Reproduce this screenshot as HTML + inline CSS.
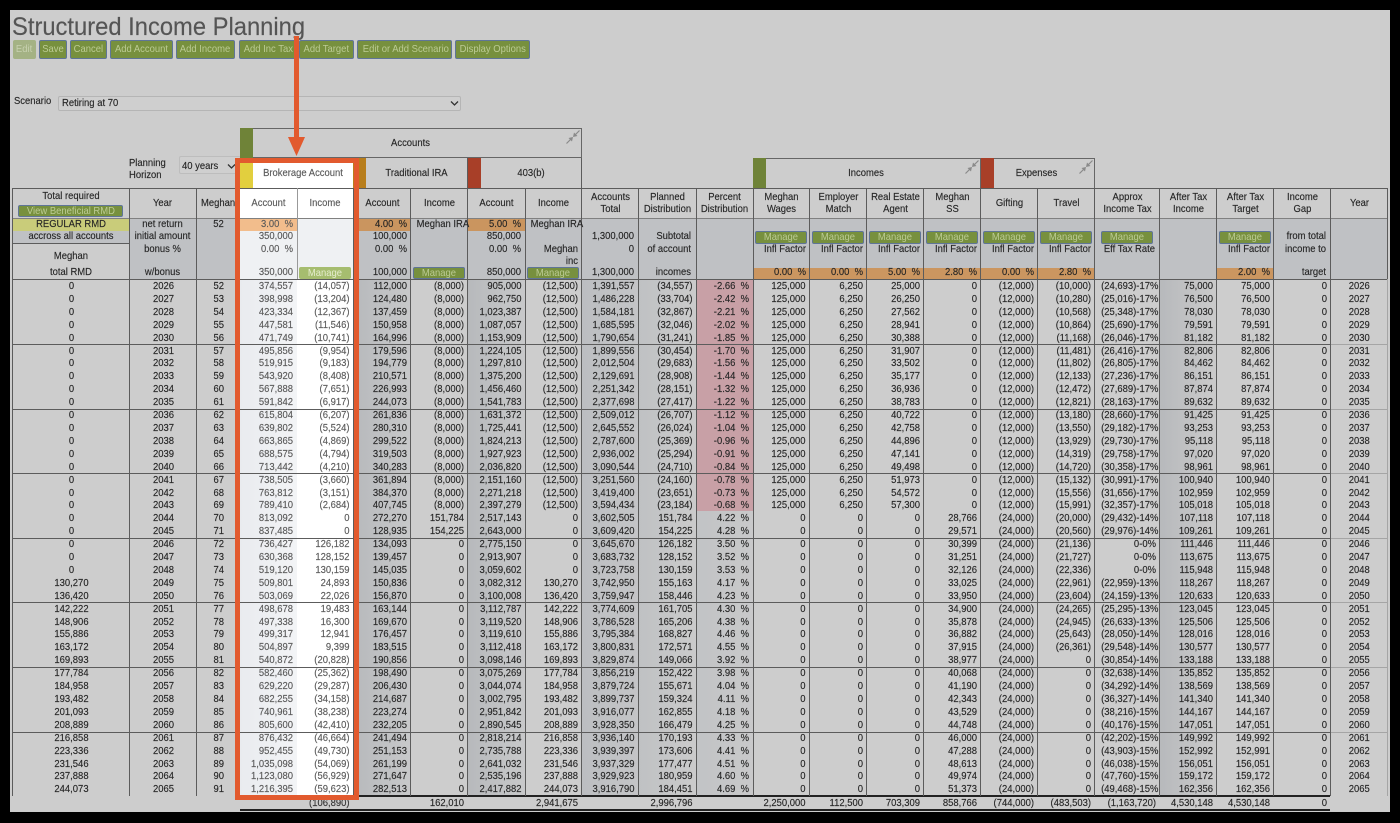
<!DOCTYPE html>
<html><head><meta charset="utf-8"><title>Structured Income Planning</title>
<style>
html,body{margin:0;padding:0;background:#000;width:1400px;height:823px;overflow:hidden}
body{position:relative;font-family:"Liberation Sans",sans-serif;font-size:10.5px;color:#262626;-webkit-text-stroke:.15px}
#w{position:absolute;left:0;top:0;width:1400px;height:823px;filter:blur(.3px)}
.a{position:absolute}
.t{position:absolute;white-space:nowrap;line-height:13px;transform:scaleX(.9);transform-origin:0 50%}
.r{text-align:right;transform-origin:100% 50%}
.c{text-align:center;transform-origin:50% 50%}
.h{color:#5a5a5a}
.b{position:absolute;box-sizing:border-box;background:#77903e;border:1px solid #5f7597;border-radius:2px;color:#bccb94;text-align:center;white-space:nowrap;overflow:hidden;-webkit-text-stroke:0}
.b span{display:inline-block;transform:scaleX(.9)}
.g{position:absolute;left:12.5px;top:280px;display:grid;grid-template-columns:117px 67px 43.5px 57px 56.5px 57px 57px 57.5px 57px 56.5px 57.5px 57px 56.5px 57px 57px 57px 57px 57px 65px 57px 57px 57px 56.5px;grid-auto-rows:12.91px;line-height:12.91px}
.g p{margin:0;padding-right:4px;text-align:right;white-space:nowrap;transform:scaleX(.9);transform-origin:calc(100% - 4px) 50%}
.g p:nth-child(23n+1),.g p:nth-child(23n+2),.g p:nth-child(23n+3),.g p:nth-child(23n){padding:0;text-align:center;transform-origin:50% 50%}
.g p:nth-child(23n+4),.g p:nth-child(23n+5){color:#5a5a5a}
.g p:nth-child(n+921){margin-top:1px}
.g p:nth-child(925){color:#333}
.vl{position:absolute;width:1px;background:#5c5c5c}
.hl{position:absolute;height:1px;background:#5c5c5c}
</style></head>
<body><div id="w">
<div class="a" style="left:10px;top:10px;width:1380px;height:802px;background:#cdcdcd"></div>

<div class="t" style="left:12px;top:12px;font-size:25px;line-height:30px;color:#555;transform:scaleX(.95)">Structured Income Planning</div>

<div class="b" style="left:13px;top:40px;width:23px;height:19px;line-height:17px;background:#a4b284;border-color:#a4b284;color:#c8d1b0"><span>Edit</span></div>
<div class="b" style="left:39px;top:40px;width:28px;height:19px;line-height:17px"><span>Save</span></div>
<div class="b" style="left:70px;top:40px;width:37px;height:19px;line-height:17px"><span>Cancel</span></div>
<div class="b" style="left:110px;top:40px;width:63px;height:19px;line-height:17px"><span>Add Account</span></div>
<div class="b" style="left:176px;top:40px;width:59px;height:19px;line-height:17px"><span>Add Income</span></div>
<div class="b" style="left:239px;top:40px;width:58px;height:19px;line-height:17px"><span>Add Inc Tax</span></div>
<div class="b" style="left:299px;top:40px;width:55px;height:19px;line-height:17px"><span>Add Target</span></div>
<div class="b" style="left:357px;top:40px;width:95px;height:19px;line-height:17px"><span>Edit or Add Scenario</span></div>
<div class="b" style="left:455px;top:40px;width:75px;height:19px;line-height:17px"><span>Display Options</span></div>

<div class="t" style="left:14px;top:95px">Scenario</div>
<div class="a" style="left:58px;top:96px;width:403px;height:15px;box-sizing:border-box;background:#cfcfcf;border:1px solid #b5b5b5;border-radius:2px"></div>
<div class="t" style="left:62px;top:97px">Retiring at 70</div>
<svg class="a" style="left:450px;top:100px" width="9" height="7" viewBox="0 0 9 7"><path d="M1 1.5L4.5 5L8 1.5" fill="none" stroke="#333" stroke-width="1.3"/></svg>

<div class="t" style="left:129px;top:157px">Planning</div>
<div class="t" style="left:129px;top:169px">Horizon</div>
<div class="a" style="left:179px;top:156px;width:62px;height:18px;box-sizing:border-box;background:#cfcfcf;border:1px solid #bdbdbd;border-radius:2px"></div>
<div class="t" style="left:182px;top:160px">40 years</div>
<svg class="a" style="left:227px;top:163px" width="9" height="7" viewBox="0 0 9 7"><path d="M1 1.5L4.5 5L8 1.5" fill="none" stroke="#333" stroke-width="1.3"/></svg>

<!-- tab blocks -->
<div class="a" style="left:240px;top:128px;width:13px;height:30px;background:#6f8338"></div>
<div class="a" style="left:253px;top:128px;width:329px;height:30px;box-sizing:border-box;border-top:1px solid #666;border-right:1px solid #666;border-bottom:1px solid #666"></div>
<div class="t c" style="left:253px;top:137px;width:315px">Accounts</div>
<div class="a" style="left:253px;top:158px;width:100px;height:30px;background:#fff"></div>
<div class="a" style="left:240px;top:158px;width:13px;height:30px;background:#e2cf3e"></div>
<div class="t c h" style="left:253px;top:167px;width:100px">Brokerage Account</div>
<div class="a" style="left:353px;top:158px;width:13px;height:30px;background:#b87e1c"></div>
<div class="t c" style="left:366px;top:167px;width:101px">Traditional IRA</div>
<div class="a" style="left:467px;top:158px;width:14px;height:30px;background:#a83f28"></div>
<div class="t c" style="left:481px;top:167px;width:100px">403(b)</div>
<div class="vl" style="left:581px;top:158px;height:30px"></div>
<svg class="a" style="left:566px;top:130px" width="14" height="14" viewBox="0 0 14 14"><path d="M13.5.5L9 5M.5 13.5L5 9" stroke="#8a8a8a" stroke-width="1.2" fill="none"/><path d="M7 7L8 2.5L11.5 6ZM7 7L6 11.5L2.5 8Z" fill="#8a8a8a"/></svg>

<div class="a" style="left:753px;top:158px;width:13px;height:30px;background:#6f8338"></div>
<div class="a" style="left:766px;top:158px;width:215px;height:30px;box-sizing:border-box;border-top:1px solid #666;border-right:1px solid #666"></div>
<div class="t c" style="left:766px;top:167px;width:200px">Incomes</div>
<svg class="a" style="left:965px;top:160px" width="14" height="14" viewBox="0 0 14 14"><path d="M13.5.5L9 5M.5 13.5L5 9" stroke="#8a8a8a" stroke-width="1.2" fill="none"/><path d="M7 7L8 2.5L11.5 6ZM7 7L6 11.5L2.5 8Z" fill="#8a8a8a"/></svg>
<div class="a" style="left:981px;top:158px;width:13px;height:30px;background:#a83f28"></div>
<div class="a" style="left:994px;top:158px;width:101px;height:30px;box-sizing:border-box;border-top:1px solid #666;border-right:1px solid #666"></div>
<div class="t c" style="left:994px;top:167px;width:85px">Expenses</div>
<svg class="a" style="left:1079px;top:160px" width="14" height="14" viewBox="0 0 14 14"><path d="M13.5.5L9 5M.5 13.5L5 9" stroke="#8a8a8a" stroke-width="1.2" fill="none"/><path d="M7 7L8 2.5L11.5 6ZM7 7L6 11.5L2.5 8Z" fill="#8a8a8a"/></svg>

<!-- sub-row shading -->
<div class="a" style="left:129px;top:218px;width:111px;height:61px;background:#bfc1c4"></div>
<div class="a" style="left:354px;top:218px;width:1033px;height:61px;background:#bfc1c4"></div>
<div class="a" style="left:13px;top:218px;width:116px;height:13px;background:#c9cc7a"></div>
<div class="a" style="left:13px;top:231px;width:116px;height:12px;background:#bfc1c4"></div>
<!-- highlighted columns -->
<div class="a" style="left:240px;top:188px;width:113px;height:30px;background:#fff"></div>
<div class="a" style="left:240px;top:218px;width:113px;height:61px;background:#eff1f3"></div>
<div class="a" style="left:240px;top:279px;width:57px;height:517px;background:linear-gradient(90deg,#e9ebef,#f3f4f6)"></div>
<div class="a" style="left:297px;top:279px;width:56px;height:517px;background:#fff"></div>
<!-- data-column shading -->
<div class="a" style="left:354px;top:279px;width:57px;height:517px;background:linear-gradient(90deg,#b7b9bc,#c8c9ca)"></div>
<div class="a" style="left:468px;top:279px;width:57px;height:517px;background:linear-gradient(90deg,#b7b9bc,#c8c9ca)"></div>
<div class="a" style="left:582px;top:279px;width:57px;height:517px;background:linear-gradient(90deg,#bcbec1,#c4c5c7)"></div>
<div class="a" style="left:639px;top:279px;width:57px;height:517px;background:linear-gradient(90deg,#bfc1c3,#cbcbcb)"></div>
<div class="a" style="left:696px;top:500px;width:57px;height:296px;background:linear-gradient(90deg,#c1c3c5,#c9c9ca)"></div>
<div class="a" style="left:696px;top:279px;width:57px;height:232px;background:#c8a0a6"></div>
<div class="a" style="left:1160px;top:279px;width:57px;height:517px;background:linear-gradient(90deg,#b7b9bc,#cbcbcb)"></div>
<!-- orange inputs -->
<div class="a" style="left:240px;top:218px;width:57px;height:13px;background:#f2bd8c"></div>
<div class="a" style="left:354px;top:218px;width:57px;height:13px;background:#ca955f"></div>
<div class="a" style="left:468px;top:218px;width:57px;height:13px;background:#ca955f"></div>
<div class="a" style="left:753px;top:268px;width:342px;height:11px;background:#cb9660"></div>
<div class="a" style="left:1217px;top:268px;width:57px;height:11px;background:#cb9660"></div>

<!-- horizontal rules -->
<div class="hl" style="left:12px;top:188px;width:1375px"></div>
<div class="hl" style="left:12px;top:218px;width:1375px;background:#808080"></div>
<div class="hl" style="left:12px;top:243px;width:117px"></div>
<div class="hl" style="left:12px;top:279px;width:1375px"></div>
<div class="hl" style="left:12px;top:344px;width:1318px"></div>
<div class="hl" style="left:12px;top:409px;width:1318px"></div>
<div class="hl" style="left:12px;top:473px;width:1318px"></div>
<div class="hl" style="left:12px;top:538px;width:1318px"></div>
<div class="hl" style="left:12px;top:602px;width:1318px"></div>
<div class="hl" style="left:12px;top:667px;width:1318px"></div>
<div class="hl" style="left:12px;top:732px;width:1318px"></div>
<div class="hl" style="left:1330px;top:344px;width:57px;background:#a5a5a5"></div>
<div class="hl" style="left:1330px;top:409px;width:57px;background:#a5a5a5"></div>
<div class="hl" style="left:1330px;top:473px;width:57px;background:#a5a5a5"></div>
<div class="hl" style="left:1330px;top:538px;width:57px;background:#a5a5a5"></div>
<div class="hl" style="left:1330px;top:602px;width:57px;background:#a5a5a5"></div>
<div class="hl" style="left:1330px;top:667px;width:57px;background:#a5a5a5"></div>
<div class="hl" style="left:1330px;top:732px;width:57px;background:#a5a5a5"></div>
<div class="a" style="left:240px;top:795px;width:1090px;height:2px;background:#222"></div>
<div class="a" style="left:240px;top:809px;width:1090px;height:2px;background:#222"></div>

<!-- vertical rules -->
<div class="vl" style="left:12px;top:188px;height:608px"></div>
<div class="vl" style="left:129px;top:188px;height:608px"></div>
<div class="vl" style="left:196px;top:188px;height:608px"></div>
<div class="vl" style="left:297px;top:188px;height:91px;background:#999"></div>
<div class="vl" style="left:353px;top:188px;height:608px"></div>
<div class="vl" style="left:410px;top:188px;height:608px"></div>
<div class="vl" style="left:467px;top:158px;height:638px"></div>
<div class="vl" style="left:525px;top:188px;height:608px"></div>
<div class="vl" style="left:581px;top:188px;height:608px"></div>
<div class="vl" style="left:638px;top:188px;height:608px"></div>
<div class="vl" style="left:696px;top:188px;height:608px"></div>
<div class="vl" style="left:753px;top:188px;height:608px"></div>
<div class="vl" style="left:809px;top:188px;height:608px"></div>
<div class="vl" style="left:866px;top:188px;height:608px"></div>
<div class="vl" style="left:923px;top:188px;height:608px"></div>
<div class="vl" style="left:980px;top:188px;height:608px"></div>
<div class="vl" style="left:1037px;top:188px;height:608px"></div>
<div class="vl" style="left:1094px;top:188px;height:608px"></div>
<div class="vl" style="left:1159px;top:188px;height:608px"></div>
<div class="vl" style="left:1216px;top:188px;height:608px"></div>
<div class="vl" style="left:1273px;top:188px;height:608px"></div>
<div class="vl" style="left:1330px;top:188px;height:608px"></div>
<div class="vl" style="left:1387px;top:188px;height:91px"></div>
<div class="vl" style="left:1387px;top:279px;height:517px;background:#a5a5a5"></div>

<!-- header labels -->
<div class="t c" style="left:13px;top:190px;width:116px">Total required</div>
<div class="b" style="left:18px;top:205px;width:105px;height:12px;line-height:10px"><span>View Beneficial RMD</span></div>
<div class="t c" style="left:129px;top:197px;width:67px">Year</div>
<div class="t" style="left:201px;top:197px">Meghan</div>
<div class="t c h" style="left:240px;top:197px;width:57px">Account</div>
<div class="t c h" style="left:297px;top:197px;width:56px">Income</div>
<div class="t c" style="left:354px;top:197px;width:57px">Account</div>
<div class="t c" style="left:411px;top:197px;width:57px">Income</div>
<div class="t c" style="left:468px;top:197px;width:57px">Account</div>
<div class="t c" style="left:525px;top:197px;width:57px">Income</div>
<div class="t c" style="left:582px;top:191px;width:57px">Accounts</div>
<div class="t c" style="left:582px;top:203px;width:57px">Total</div>
<div class="t c" style="left:639px;top:191px;width:57px">Planned</div>
<div class="t c" style="left:639px;top:203px;width:57px">Distribution</div>
<div class="t c" style="left:696px;top:191px;width:57px">Percent</div>
<div class="t c" style="left:696px;top:203px;width:57px">Distribution</div>
<div class="t c" style="left:753px;top:191px;width:57px">Meghan</div>
<div class="t c" style="left:753px;top:203px;width:57px">Wages</div>
<div class="t c" style="left:810px;top:191px;width:57px">Employer</div>
<div class="t c" style="left:810px;top:203px;width:57px">Match</div>
<div class="t c" style="left:867px;top:191px;width:57px">Real Estate</div>
<div class="t c" style="left:867px;top:203px;width:57px">Agent</div>
<div class="t c" style="left:924px;top:191px;width:57px">Meghan</div>
<div class="t c" style="left:924px;top:203px;width:57px">SS</div>
<div class="t c" style="left:981px;top:197px;width:57px">Gifting</div>
<div class="t c" style="left:1038px;top:197px;width:57px">Travel</div>
<div class="t c" style="left:1095px;top:191px;width:65px">Approx</div>
<div class="t c" style="left:1095px;top:203px;width:65px">Income Tax</div>
<div class="t c" style="left:1160px;top:191px;width:57px">After Tax</div>
<div class="t c" style="left:1160px;top:203px;width:57px">Income</div>
<div class="t c" style="left:1217px;top:191px;width:57px">After Tax</div>
<div class="t c" style="left:1217px;top:203px;width:57px">Target</div>
<div class="t c" style="left:1274px;top:191px;width:57px">Income</div>
<div class="t c" style="left:1274px;top:203px;width:57px">Gap</div>
<div class="t c" style="left:1331px;top:197px;width:57px">Year</div>

<!-- sub rows, left -->
<div class="t c" style="left:13px;top:218px;width:116px">REGULAR RMD</div>
<div class="t c" style="left:13px;top:230px;width:116px">accross all accounts</div>
<div class="t c" style="left:13px;top:250px;width:116px">Meghan</div>
<div class="t c" style="left:13px;top:266px;width:116px">total RMD</div>
<div class="t c" style="left:129px;top:218px;width:67px">net return</div>
<div class="t c" style="left:129px;top:230px;width:67px">initial amount</div>
<div class="t c" style="left:129px;top:243px;width:67px">bonus %</div>
<div class="t c" style="left:129px;top:266px;width:67px">w/bonus</div>
<div class="t c" style="left:197px;top:218px;width:43px">52</div>

<div class="t r h" style="left:240px;top:218px;width:53px">3.00 &nbsp;%</div>
<div class="t r h" style="left:240px;top:230px;width:53px">350,000</div>
<div class="t r h" style="left:240px;top:243px;width:53px">0.00 &nbsp;%</div>
<div class="t r h" style="left:240px;top:266px;width:53px">350,000</div>
<div class="b" style="left:299px;top:267px;width:52px;height:12px;line-height:10px;background:#a6bd6f;border-color:#a6bd6f;color:#e6edcf"><span>Manage</span></div>

<div class="t r" style="left:354px;top:218px;width:53px">4.00 &nbsp;%</div>
<div class="t r" style="left:354px;top:230px;width:53px">100,000</div>
<div class="t r" style="left:354px;top:243px;width:53px">0.00 &nbsp;%</div>
<div class="t r" style="left:354px;top:266px;width:53px">100,000</div>
<div class="t r" style="left:411px;top:218px;width:56px">Meghan IRA</div>
<div class="b" style="left:413px;top:267px;width:52px;height:12px;line-height:10px"><span>Manage</span></div>

<div class="t r" style="left:468px;top:218px;width:53px">5.00 &nbsp;%</div>
<div class="t r" style="left:468px;top:230px;width:53px">850,000</div>
<div class="t r" style="left:468px;top:243px;width:53px">0.00 &nbsp;%</div>
<div class="t r" style="left:468px;top:266px;width:53px">850,000</div>
<div class="t r" style="left:525px;top:218px;width:56px">Meghan IRA</div>
<div class="t r" style="left:525px;top:243px;width:53px">Meghan</div>
<div class="t r" style="left:525px;top:255px;width:53px">inc</div>
<div class="b" style="left:527px;top:267px;width:52px;height:12px;line-height:10px"><span>Manage</span></div>

<div class="t r" style="left:582px;top:230px;width:52px">1,300,000</div>
<div class="t r" style="left:582px;top:243px;width:52px">0</div>
<div class="t r" style="left:582px;top:266px;width:52px">1,300,000</div>
<div class="t r" style="left:639px;top:230px;width:52px">Subtotal</div>
<div class="t r" style="left:639px;top:243px;width:52px">of account</div>
<div class="t r" style="left:639px;top:266px;width:52px">incomes</div>

<!-- sub rows, right -->
<div class="b" style="left:755px;top:231px;width:52px;height:13px;line-height:11px"><span>Manage</span></div>
<div class="b" style="left:812px;top:231px;width:52px;height:13px;line-height:11px"><span>Manage</span></div>
<div class="b" style="left:869px;top:231px;width:52px;height:13px;line-height:11px"><span>Manage</span></div>
<div class="b" style="left:926px;top:231px;width:52px;height:13px;line-height:11px"><span>Manage</span></div>
<div class="b" style="left:983px;top:231px;width:52px;height:13px;line-height:11px"><span>Manage</span></div>
<div class="b" style="left:1040px;top:231px;width:52px;height:13px;line-height:11px"><span>Manage</span></div>
<div class="b" style="left:1101px;top:231px;width:52px;height:13px;line-height:11px"><span>Manage</span></div>
<div class="b" style="left:1219px;top:231px;width:52px;height:13px;line-height:11px"><span>Manage</span></div>
<div class="t r" style="left:753px;top:243px;width:53px">Infl Factor</div>
<div class="t r" style="left:810px;top:243px;width:53px">Infl Factor</div>
<div class="t r" style="left:867px;top:243px;width:53px">Infl Factor</div>
<div class="t r" style="left:924px;top:243px;width:53px">Infl Factor</div>
<div class="t r" style="left:981px;top:243px;width:53px">Infl Factor</div>
<div class="t r" style="left:1038px;top:243px;width:53px">Infl Factor</div>
<div class="t r" style="left:1095px;top:243px;width:60px">Eff Tax Rate</div>
<div class="t r" style="left:1217px;top:243px;width:53px">Infl Factor</div>
<div class="t r" style="left:753px;top:266px;width:53px">0.00 &nbsp;%</div>
<div class="t r" style="left:810px;top:266px;width:53px">0.00 &nbsp;%</div>
<div class="t r" style="left:867px;top:266px;width:53px">5.00 &nbsp;%</div>
<div class="t r" style="left:924px;top:266px;width:53px">2.80 &nbsp;%</div>
<div class="t r" style="left:981px;top:266px;width:53px">0.00 &nbsp;%</div>
<div class="t r" style="left:1038px;top:266px;width:53px">2.80 &nbsp;%</div>
<div class="t r" style="left:1217px;top:266px;width:53px">2.00 &nbsp;%</div>
<div class="t r" style="left:1274px;top:230px;width:52px">from total</div>
<div class="t r" style="left:1274px;top:243px;width:52px">income to</div>
<div class="t r" style="left:1274px;top:266px;width:52px">target</div>

<!-- data -->
<div class="g">
<p>0<p>2026<p>52<p>374,557<p>(14,057)<p>112,000<p>(8,000)<p>905,000<p>(12,500)<p>1,391,557<p>(34,557)<p>-2.66 &nbsp;%<p>125,000<p>6,250<p>25,000<p>0<p>(12,000)<p>(10,000)<p>(24,693)-17%<p>75,000<p>75,000<p>0<p>2026
<p>0<p>2027<p>53<p>398,998<p>(13,204)<p>124,480<p>(8,000)<p>962,750<p>(12,500)<p>1,486,228<p>(33,704)<p>-2.42 &nbsp;%<p>125,000<p>6,250<p>26,250<p>0<p>(12,000)<p>(10,280)<p>(25,016)-17%<p>76,500<p>76,500<p>0<p>2027
<p>0<p>2028<p>54<p>423,334<p>(12,367)<p>137,459<p>(8,000)<p>1,023,387<p>(12,500)<p>1,584,181<p>(32,867)<p>-2.21 &nbsp;%<p>125,000<p>6,250<p>27,562<p>0<p>(12,000)<p>(10,568)<p>(25,348)-17%<p>78,030<p>78,030<p>0<p>2028
<p>0<p>2029<p>55<p>447,581<p>(11,546)<p>150,958<p>(8,000)<p>1,087,057<p>(12,500)<p>1,685,595<p>(32,046)<p>-2.02 &nbsp;%<p>125,000<p>6,250<p>28,941<p>0<p>(12,000)<p>(10,864)<p>(25,690)-17%<p>79,591<p>79,591<p>0<p>2029
<p>0<p>2030<p>56<p>471,749<p>(10,741)<p>164,996<p>(8,000)<p>1,153,909<p>(12,500)<p>1,790,654<p>(31,241)<p>-1.85 &nbsp;%<p>125,000<p>6,250<p>30,388<p>0<p>(12,000)<p>(11,168)<p>(26,046)-17%<p>81,182<p>81,182<p>0<p>2030
<p>0<p>2031<p>57<p>495,856<p>(9,954)<p>179,596<p>(8,000)<p>1,224,105<p>(12,500)<p>1,899,556<p>(30,454)<p>-1.70 &nbsp;%<p>125,000<p>6,250<p>31,907<p>0<p>(12,000)<p>(11,481)<p>(26,416)-17%<p>82,806<p>82,806<p>0<p>2031
<p>0<p>2032<p>58<p>519,915<p>(9,183)<p>194,779<p>(8,000)<p>1,297,810<p>(12,500)<p>2,012,504<p>(29,683)<p>-1.56 &nbsp;%<p>125,000<p>6,250<p>33,502<p>0<p>(12,000)<p>(11,802)<p>(26,805)-17%<p>84,462<p>84,462<p>0<p>2032
<p>0<p>2033<p>59<p>543,920<p>(8,408)<p>210,571<p>(8,000)<p>1,375,200<p>(12,500)<p>2,129,691<p>(28,908)<p>-1.44 &nbsp;%<p>125,000<p>6,250<p>35,177<p>0<p>(12,000)<p>(12,133)<p>(27,236)-17%<p>86,151<p>86,151<p>0<p>2033
<p>0<p>2034<p>60<p>567,888<p>(7,651)<p>226,993<p>(8,000)<p>1,456,460<p>(12,500)<p>2,251,342<p>(28,151)<p>-1.32 &nbsp;%<p>125,000<p>6,250<p>36,936<p>0<p>(12,000)<p>(12,472)<p>(27,689)-17%<p>87,874<p>87,874<p>0<p>2034
<p>0<p>2035<p>61<p>591,842<p>(6,917)<p>244,073<p>(8,000)<p>1,541,783<p>(12,500)<p>2,377,698<p>(27,417)<p>-1.22 &nbsp;%<p>125,000<p>6,250<p>38,783<p>0<p>(12,000)<p>(12,821)<p>(28,163)-17%<p>89,632<p>89,632<p>0<p>2035
<p>0<p>2036<p>62<p>615,804<p>(6,207)<p>261,836<p>(8,000)<p>1,631,372<p>(12,500)<p>2,509,012<p>(26,707)<p>-1.12 &nbsp;%<p>125,000<p>6,250<p>40,722<p>0<p>(12,000)<p>(13,180)<p>(28,660)-17%<p>91,425<p>91,425<p>0<p>2036
<p>0<p>2037<p>63<p>639,802<p>(5,524)<p>280,310<p>(8,000)<p>1,725,441<p>(12,500)<p>2,645,552<p>(26,024)<p>-1.04 &nbsp;%<p>125,000<p>6,250<p>42,758<p>0<p>(12,000)<p>(13,550)<p>(29,182)-17%<p>93,253<p>93,253<p>0<p>2037
<p>0<p>2038<p>64<p>663,865<p>(4,869)<p>299,522<p>(8,000)<p>1,824,213<p>(12,500)<p>2,787,600<p>(25,369)<p>-0.96 &nbsp;%<p>125,000<p>6,250<p>44,896<p>0<p>(12,000)<p>(13,929)<p>(29,730)-17%<p>95,118<p>95,118<p>0<p>2038
<p>0<p>2039<p>65<p>688,575<p>(4,794)<p>319,503<p>(8,000)<p>1,927,923<p>(12,500)<p>2,936,002<p>(25,294)<p>-0.91 &nbsp;%<p>125,000<p>6,250<p>47,141<p>0<p>(12,000)<p>(14,319)<p>(29,758)-17%<p>97,020<p>97,020<p>0<p>2039
<p>0<p>2040<p>66<p>713,442<p>(4,210)<p>340,283<p>(8,000)<p>2,036,820<p>(12,500)<p>3,090,544<p>(24,710)<p>-0.84 &nbsp;%<p>125,000<p>6,250<p>49,498<p>0<p>(12,000)<p>(14,720)<p>(30,358)-17%<p>98,961<p>98,961<p>0<p>2040
<p>0<p>2041<p>67<p>738,505<p>(3,660)<p>361,894<p>(8,000)<p>2,151,160<p>(12,500)<p>3,251,560<p>(24,160)<p>-0.78 &nbsp;%<p>125,000<p>6,250<p>51,973<p>0<p>(12,000)<p>(15,132)<p>(30,991)-17%<p>100,940<p>100,940<p>0<p>2041
<p>0<p>2042<p>68<p>763,812<p>(3,151)<p>384,370<p>(8,000)<p>2,271,218<p>(12,500)<p>3,419,400<p>(23,651)<p>-0.73 &nbsp;%<p>125,000<p>6,250<p>54,572<p>0<p>(12,000)<p>(15,556)<p>(31,656)-17%<p>102,959<p>102,959<p>0<p>2042
<p>0<p>2043<p>69<p>789,410<p>(2,684)<p>407,745<p>(8,000)<p>2,397,279<p>(12,500)<p>3,594,434<p>(23,184)<p>-0.68 &nbsp;%<p>125,000<p>6,250<p>57,300<p>0<p>(12,000)<p>(15,991)<p>(32,357)-17%<p>105,018<p>105,018<p>0<p>2043
<p>0<p>2044<p>70<p>813,092<p>0<p>272,270<p>151,784<p>2,517,143<p>0<p>3,602,505<p>151,784<p>4.22 &nbsp;%<p>0<p>0<p>0<p>28,766<p>(24,000)<p>(20,000)<p>(29,432)-14%<p>107,118<p>107,118<p>0<p>2044
<p>0<p>2045<p>71<p>837,485<p>0<p>128,935<p>154,225<p>2,643,000<p>0<p>3,609,420<p>154,225<p>4.28 &nbsp;%<p>0<p>0<p>0<p>29,571<p>(24,000)<p>(20,560)<p>(29,976)-14%<p>109,261<p>109,261<p>0<p>2045
<p>0<p>2046<p>72<p>736,427<p>126,182<p>134,093<p>0<p>2,775,150<p>0<p>3,645,670<p>126,182<p>3.50 &nbsp;%<p>0<p>0<p>0<p>30,399<p>(24,000)<p>(21,136)<p>0-0%<p>111,446<p>111,446<p>0<p>2046
<p>0<p>2047<p>73<p>630,368<p>128,152<p>139,457<p>0<p>2,913,907<p>0<p>3,683,732<p>128,152<p>3.52 &nbsp;%<p>0<p>0<p>0<p>31,251<p>(24,000)<p>(21,727)<p>0-0%<p>113,675<p>113,675<p>0<p>2047
<p>0<p>2048<p>74<p>519,120<p>130,159<p>145,035<p>0<p>3,059,602<p>0<p>3,723,758<p>130,159<p>3.53 &nbsp;%<p>0<p>0<p>0<p>32,126<p>(24,000)<p>(22,336)<p>0-0%<p>115,948<p>115,948<p>0<p>2048
<p>130,270<p>2049<p>75<p>509,801<p>24,893<p>150,836<p>0<p>3,082,312<p>130,270<p>3,742,950<p>155,163<p>4.17 &nbsp;%<p>0<p>0<p>0<p>33,025<p>(24,000)<p>(22,961)<p>(22,959)-13%<p>118,267<p>118,267<p>0<p>2049
<p>136,420<p>2050<p>76<p>503,069<p>22,026<p>156,870<p>0<p>3,100,008<p>136,420<p>3,759,947<p>158,446<p>4.23 &nbsp;%<p>0<p>0<p>0<p>33,950<p>(24,000)<p>(23,604)<p>(24,159)-13%<p>120,633<p>120,633<p>0<p>2050
<p>142,222<p>2051<p>77<p>498,678<p>19,483<p>163,144<p>0<p>3,112,787<p>142,222<p>3,774,609<p>161,705<p>4.30 &nbsp;%<p>0<p>0<p>0<p>34,900<p>(24,000)<p>(24,265)<p>(25,295)-13%<p>123,045<p>123,045<p>0<p>2051
<p>148,906<p>2052<p>78<p>497,338<p>16,300<p>169,670<p>0<p>3,119,520<p>148,906<p>3,786,528<p>165,206<p>4.38 &nbsp;%<p>0<p>0<p>0<p>35,878<p>(24,000)<p>(24,945)<p>(26,633)-13%<p>125,506<p>125,506<p>0<p>2052
<p>155,886<p>2053<p>79<p>499,317<p>12,941<p>176,457<p>0<p>3,119,610<p>155,886<p>3,795,384<p>168,827<p>4.46 &nbsp;%<p>0<p>0<p>0<p>36,882<p>(24,000)<p>(25,643)<p>(28,050)-14%<p>128,016<p>128,016<p>0<p>2053
<p>163,172<p>2054<p>80<p>504,897<p>9,399<p>183,515<p>0<p>3,112,418<p>163,172<p>3,800,831<p>172,571<p>4.55 &nbsp;%<p>0<p>0<p>0<p>37,915<p>(24,000)<p>(26,361)<p>(29,548)-14%<p>130,577<p>130,577<p>0<p>2054
<p>169,893<p>2055<p>81<p>540,872<p>(20,828)<p>190,856<p>0<p>3,098,146<p>169,893<p>3,829,874<p>149,066<p>3.92 &nbsp;%<p>0<p>0<p>0<p>38,977<p>(24,000)<p>0<p>(30,854)-14%<p>133,188<p>133,188<p>0<p>2055
<p>177,784<p>2056<p>82<p>582,460<p>(25,362)<p>198,490<p>0<p>3,075,269<p>177,784<p>3,856,219<p>152,422<p>3.98 &nbsp;%<p>0<p>0<p>0<p>40,068<p>(24,000)<p>0<p>(32,638)-14%<p>135,852<p>135,852<p>0<p>2056
<p>184,958<p>2057<p>83<p>629,220<p>(29,287)<p>206,430<p>0<p>3,044,074<p>184,958<p>3,879,724<p>155,671<p>4.04 &nbsp;%<p>0<p>0<p>0<p>41,190<p>(24,000)<p>0<p>(34,292)-14%<p>138,569<p>138,569<p>0<p>2057
<p>193,482<p>2058<p>84<p>682,255<p>(34,158)<p>214,687<p>0<p>3,002,795<p>193,482<p>3,899,737<p>159,324<p>4.11 &nbsp;%<p>0<p>0<p>0<p>42,343<p>(24,000)<p>0<p>(36,327)-14%<p>141,340<p>141,340<p>0<p>2058
<p>201,093<p>2059<p>85<p>740,961<p>(38,238)<p>223,274<p>0<p>2,951,842<p>201,093<p>3,916,077<p>162,855<p>4.18 &nbsp;%<p>0<p>0<p>0<p>43,529<p>(24,000)<p>0<p>(38,216)-15%<p>144,167<p>144,167<p>0<p>2059
<p>208,889<p>2060<p>86<p>805,600<p>(42,410)<p>232,205<p>0<p>2,890,545<p>208,889<p>3,928,350<p>166,479<p>4.25 &nbsp;%<p>0<p>0<p>0<p>44,748<p>(24,000)<p>0<p>(40,176)-15%<p>147,051<p>147,051<p>0<p>2060
<p>216,858<p>2061<p>87<p>876,432<p>(46,664)<p>241,494<p>0<p>2,818,214<p>216,858<p>3,936,140<p>170,193<p>4.33 &nbsp;%<p>0<p>0<p>0<p>46,000<p>(24,000)<p>0<p>(42,202)-15%<p>149,992<p>149,992<p>0<p>2061
<p>223,336<p>2062<p>88<p>952,455<p>(49,730)<p>251,153<p>0<p>2,735,788<p>223,336<p>3,939,397<p>173,606<p>4.41 &nbsp;%<p>0<p>0<p>0<p>47,288<p>(24,000)<p>0<p>(43,903)-15%<p>152,992<p>152,991<p>0<p>2062
<p>231,546<p>2063<p>89<p>1,035,098<p>(54,069)<p>261,199<p>0<p>2,641,032<p>231,546<p>3,937,329<p>177,477<p>4.51 &nbsp;%<p>0<p>0<p>0<p>48,613<p>(24,000)<p>0<p>(46,038)-15%<p>156,051<p>156,051<p>0<p>2063
<p>237,888<p>2064<p>90<p>1,123,080<p>(56,929)<p>271,647<p>0<p>2,535,196<p>237,888<p>3,929,923<p>180,959<p>4.60 &nbsp;%<p>0<p>0<p>0<p>49,974<p>(24,000)<p>0<p>(47,760)-15%<p>159,172<p>159,172<p>0<p>2064
<p>244,073<p>2065<p>91<p>1,216,395<p>(59,623)<p>282,513<p>0<p>2,417,882<p>244,073<p>3,916,790<p>184,451<p>4.69 &nbsp;%<p>0<p>0<p>0<p>51,373<p>(24,000)<p>0<p>(49,468)-15%<p>162,356<p>162,356<p>0<p>2065
<p><p><p><p><p>(106,890)<p><p>162,010<p><p>2,941,675<p><p>2,996,796<p><p>2,250,000<p>112,500<p>703,309<p>858,766<p>(744,000)<p>(483,503)<p>(1,163,720)<p>4,530,148<p>4,530,148<p>0<p>
</div>

<!-- orange frame + arrow -->
<div class="a" style="left:235px;top:158px;width:123.5px;height:642px;box-sizing:border-box;border:5px solid #e25a2e"></div>
<svg class="a" style="left:285px;top:36px" width="24" height="122" viewBox="0 0 24 122"><path d="M9 0H14V101H20L11.5 120L3 101H9Z" fill="#e25a2e"/></svg>
</div></body></html>
